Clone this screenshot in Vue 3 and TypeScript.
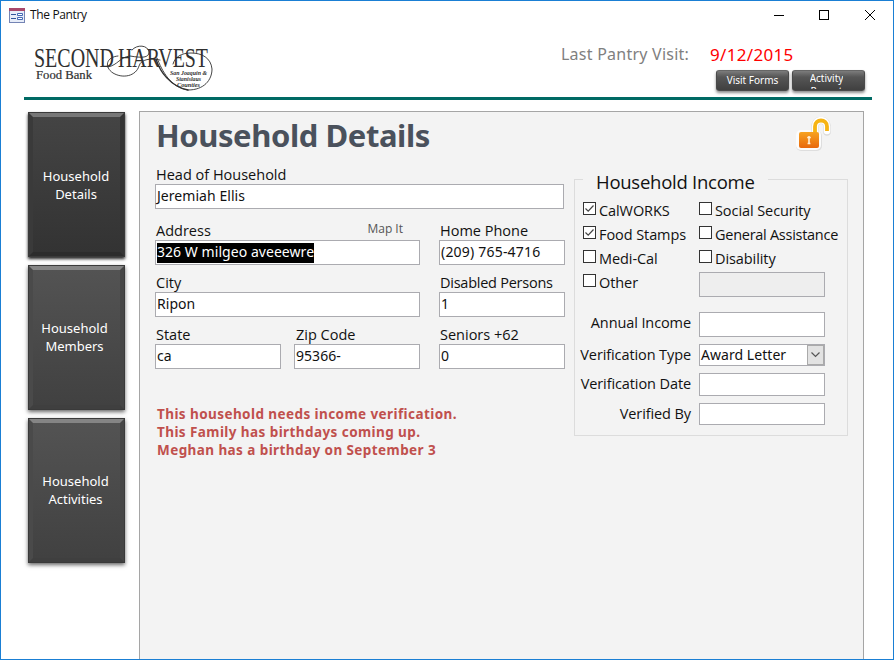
<script setup lang="ts">
import { ref } from 'vue'

interface Field {
  key: string
  label: string
  value: string
  selected?: boolean
}

interface Source {
  name: string
  checked: boolean
}

const nav = ref(['Details', 'Members', 'Activities'])
const active = ref('Details')

const fields = ref<Field[]>([
  { key: 'head', label: 'Head of Household', value: 'Jeremiah Ellis' },
  { key: 'address', label: 'Address', value: '326 W milgeo aveeewre', selected: true },
  { key: 'phone', label: 'Home Phone', value: '(209) 765-4716' },
  { key: 'city', label: 'City', value: 'Ripon' },
  { key: 'disabled', label: 'Disabled Persons', value: '1' },
  { key: 'state', label: 'State', value: 'ca' },
  { key: 'zip', label: 'Zip Code', value: '95366-' },
  { key: 'seniors', label: 'Seniors +62', value: '0' },
])

const sources = ref<Source[]>([
  { name: 'CalWORKS', checked: true },
  { name: 'Social Security', checked: false },
  { name: 'Food Stamps', checked: true },
  { name: 'General Assistance', checked: false },
  { name: 'Medi-Cal', checked: false },
  { name: 'Disability', checked: false },
  { name: 'Other', checked: false },
])

const notices = [
  'This household needs income verification.',
  'This Family has birthdays coming up.',
  'Meghan has a birthday on September 3',
]
</script>

<template>
  <div class="window">
    <header class="titlebar">
      <svg class="app-icon" width="16" height="15" viewBox="0 0 16 15">
        <rect x="0.5" y="0.5" width="15" height="14" fill="#e6ecf8" stroke="#7484b4" />
        <rect x="0" y="0" width="16" height="3" fill="#a8476b" />
        <path d="M2 6.500h5M2 10.500h5" stroke="#31549b" />
        <path d="M8.500 5.500h5v2h-5zM8.500 9.500h5v2h-5z" fill="#fff" stroke="#4469b4" />
      </svg>
      <span class="caption">The Pantry</span>
      <svg class="controls" width="104" height="12" viewBox="0 0 104 12" fill="none" stroke="#000">
        <path d="M1 6.500h10" />
        <rect x="46.500" y="1.500" width="9" height="9" />
        <path d="M92 1l10 10M102 1L92 11" />
      </svg>
    </header>

    <section class="banner">
      <svg class="logo" width="186" height="54" viewBox="0 0 186 54">
        <g fill="#303030" font-family="'Liberation Serif', serif">
          <text x="4" y="26" font-size="28" textLength="80" lengthAdjust="spacingAndGlyphs">SECOND</text>
          <text x="88" y="26" font-size="28" textLength="90" lengthAdjust="spacingAndGlyphs">HARVEST</text>
          <text x="6" y="38" font-size="12.500" stroke="#303030" stroke-width=".2" textLength="56" lengthAdjust="spacingAndGlyphs">Food Bank</text>
          <g font-size="6.500" font-weight="bold" font-style="italic">
            <text x="140" y="33.500" textLength="37" lengthAdjust="spacingAndGlyphs">San Joaquin &amp;</text>
            <text x="146" y="39.500" textLength="25" lengthAdjust="spacingAndGlyphs">Stanislaus</text>
            <text x="147" y="45.500" textLength="23" lengthAdjust="spacingAndGlyphs">Counties</text>
          </g>
        </g>
        <g fill="none" stroke="#303030" stroke-width=".9" stroke-linecap="round">
          <path d="M88 15C76 16 74 26 83 32C93 38 106 35 109 25C111 18 121 17 130 19" />
          <path d="M78 26C88 24 90 16 100 15C112 17 119 17 119 11C118 4 107 3 102 9" />
          <path d="M127 17C132 30 141 47 158 49C174 49 182 39 182 28C181 17 172 12 161 12C151 12 145 16 143 23" />
          <path d="M126 18C130 31 140 45 158 49" stroke-width="1.300" />
        </g>
      </svg>
      <div class="visit">
        <div class="visit-line">
          <span class="visit-label">Last Pantry Visit:</span>
          <span class="visit-date">9/12/2015</span>
        </div>
        <div class="actions">
          <button class="bevel small" type="button"><span class="forms">Visit Forms</span></button>
          <button class="bevel small report" type="button"><span>Activity<br />Report</span></button>
        </div>
      </div>
    </section>

    <main class="body">
      <nav class="sidebar">
        <button
          v-for="item in nav"
          :key="item"
          type="button"
          class="bevel tile"
          :class="[item.toLowerCase(), { active: item === active }]"
          @click="active = item"
        >
          <span>Household<br />{{ item }}</span>
        </button>
      </nav>

      <section class="panel">
        <div class="left">
          <h1><span>Household Details</span></h1>
          <div class="fields">
            <div v-for="f in fields" :key="f.key" class="field" :class="f.key">
              <div class="label-row">
                <label>{{ f.label }}</label>
                <a v-if="f.key === 'address'" class="map">Map It</a>
              </div>
              <div class="box">
                <span class="value" :class="{ selected: f.selected }">{{ f.value }}</span>
              </div>
            </div>
          </div>
          <div class="notices">
            <p v-for="n in notices" :key="n"><span>{{ n }}</span></p>
          </div>
        </div>

        <div class="right">
          <svg class="lock" width="36" height="36" viewBox="0 0 36 36">
            <defs>
              <linearGradient id="lockFill" x1="0" y1="0" x2="0" y2="1">
                <stop offset="0" stop-color="#f7a321" />
                <stop offset="1" stop-color="#e8680d" />
              </linearGradient>
            </defs>
            <rect x="1" y="14" width="26" height="20" rx="5" fill="#dedede" />
            <rect x="1" y="13" width="25" height="20" rx="5" fill="#fcfcfc" />
            <path d="M20 18V10C20 1 32 1 32 10V15" fill="none" stroke="#dcdcdc" stroke-width="7.500" stroke-linecap="round" />
            <path d="M20 18V9.500C20 1 32 1 32 9.500V14" fill="none" stroke="#fff" stroke-width="6.500" stroke-linecap="round" />
            <path d="M20 17V9.500C20 1.500 32 1.500 32 9.500V14" fill="none" stroke="#f6b414" stroke-width="3.800" />
            <rect x="4" y="15" width="20" height="16" rx="2" fill="url(#lockFill)" />
            <path d="M14 19v7.500M12.200 20.500h3.600M12.600 26.500h2.800" fill="none" stroke="#fff1da" stroke-width="1.600" />
          </svg>

          <div class="income">
            <h2><span>Household Income</span></h2>
            <div class="sources">
              <div v-for="s in sources" :key="s.name" class="source">
                <svg class="check" width="13" height="13" viewBox="0 0 13 13">
                  <rect x=".5" y=".5" width="12" height="12" fill="#fff" stroke="#333" />
                  <path v-if="s.checked" d="M2.500 6.500l2.700 2.700L10.500 3.500" fill="none" stroke="#444" stroke-width="1.200" />
                </svg>
                <label>{{ s.name }}</label>
              </div>
              <div class="box other"></div>
            </div>
            <div class="verify">
              <label>Annual Income</label>
              <div class="box annual"></div>
              <label>Verification Type</label>
              <div class="box combo">
                <span class="value">Award Letter</span>
                <span class="arrow">
                  <svg width="9" height="6" viewBox="0 0 9 6"><path d="M.5.5l4 4 4-4" fill="none" stroke="#555" stroke-width="1.200" /></svg>
                </span>
              </div>
              <label>Verification Date</label>
              <div class="box date"></div>
              <label>Verified By</label>
              <div class="box by"></div>
            </div>
          </div>
        </div>
      </section>
    </main>
  </div>
</template>

<style>
html,
body {
  margin: 0;
  overflow: hidden;
}
</style>

<style scoped>
* {
  box-sizing: border-box;
}
.window {
  width: 894px;
  height: 660px;
  border: 1px solid #1a7fd4;
  background: #fff;
  color: #111;
  font-family: 'Open Sans', 'Noto Sans', sans-serif;
  display: flex;
  flex-direction: column;
  overflow: hidden;
  white-space: nowrap;
}
.titlebar {
  height: 30px;
  flex: none;
  display: flex;
  align-items: center;
  padding: 0 16px 2px 8px;
}
.caption {
  margin-left: 5px;
  font-size: 12px;
  letter-spacing: -0.35px;
  line-height: 18px;
}
.controls {
  margin-left: auto;
}
.banner {
  height: 69px;
  flex: none;
  margin: 0 21px 0 23px;
  border-bottom: 3px solid #006a64;
  display: flex;
  justify-content: space-between;
}
.logo {
  margin: 10px 0 0 6px;
}
.visit {
  display: flex;
  flex-direction: column;
  align-items: flex-end;
  padding: 11px 7px 0 0;
}
.visit-line {
  display: flex;
  height: 28px;
  line-height: 25px;
  width: 304px;
}
.visit-label {
  width: 149px;
  font-family: 'Noto Sans', sans-serif;
  font-size: 16px;
  letter-spacing: 0.24px;
  color: #808080;
}
.visit-date {
  color: #f00;
  font-family: 'Noto Sans', sans-serif;
  font-size: 17px;
  letter-spacing: 0.32px;
}
.actions {
  display: flex;
  gap: 3px;
}
.bevel {
  border: 0;
  padding: 0;
  color: #fff;
  font-family: 'Noto Sans', sans-serif;
  overflow: hidden;
}
.small {
  width: 73px;
  height: 21px;
  border-radius: 3px;
  background: linear-gradient(#7c7c7c 0, #565656 6px, #404040);
  border: 1px solid #4a4a4a;
  border-top-color: #666;
  box-shadow: 0 2px 3px rgba(0, 0, 0, 0.45);
  font-size: 10px;
  line-height: 13px;
  display: flex;
  justify-content: center;
  align-items: flex-start;
  padding-top: 3px;
  text-align: center;
}
.report {
  padding: 1px 4px 0 0;
  line-height: 13px;
}
.report span {
  height: 17px;
  overflow: hidden;
}
.body {
  flex: 1;
  display: flex;
  min-height: 0;
  padding: 11px 0 0 27px;
}
.sidebar {
  width: 97px;
  margin: 1px 14px 0 0;
  display: flex;
  flex-direction: column;
  gap: 8px;
}
.tile {
  height: 145px;
  flex: none;
  border: 5px solid;
  border-color: #858585 #464646 #3f3f3f #4a4a4a;
  outline: 1px solid #3a3a3a;
  outline-offset: -1px;
  background: linear-gradient(#535353, #414141);
  box-shadow: 0 2px 4px rgba(0, 0, 0, 0.6);
  font-size: 13px;
  line-height: 18px;
}
.tile.active {
  background: linear-gradient(#444, #333);
  border-color: #777 #353535 #2c2c2c #3a3a3a;
  box-shadow: 0 2px 3px #222;
  padding-right: 1px;
}
.tile.members {
  padding: 0 4px 2px 0;
}
.tile.activities {
  padding: 0 2px 2px 0;
}
.panel {
  width: 725px;
  background: #f3f3f3;
  border: 1px solid #a5a5a5;
  border-bottom: 0;
  display: flex;
  padding-left: 15px;
}
.left {
  width: 419px;
  flex: none;
}
h1 {
  height: 52px;
  margin: 0;
  padding-left: 1px;
  font-family: 'Noto Sans', sans-serif;
  font-size: 31px;
  line-height: 47px;
  letter-spacing: -0.42px;
  color: #4a515c;
  font-weight: 700;
}
.fields {
  display: grid;
  grid-template-columns: 126px 13px 126px 19px 126px;
  row-gap: 7px;
}
.field {
  display: flex;
  flex-direction: column;
}
.head {
  grid-column: 1 / -1;
  margin: 0 1px 4px 0;
}
.address,
.city {
  grid-column: 1 / 4;
}
.phone,
.disabled,
.seniors {
  grid-column: 5;
}
.phone .value {
  letter-spacing: 0.2px;
}
.disabled label {
  letter-spacing: -0.25px;
}
.state {
  grid-column: 1;
}
.zip {
  grid-column: 3;
}
.zip .label-row {
  padding-left: 2px;
}
.label-row {
  display: flex;
  justify-content: space-between;
  height: 20px;
  line-height: 21px;
  padding-left: 1px;
}
label {
  font-size: 14.5px;
}
.map {
  margin-right: 17px;
  font-size: 12px;
  line-height: 17px;
  color: #555;
}
.box {
  height: 25px;
  border: 1px solid #ababb0;
  background: #fff;
  padding: 1px 0 0 1px;
  line-height: 19px;
}
.value {
  display: inline-block;
  height: 20px;
  font-family: 'Noto Sans', sans-serif;
  font-size: 14px;
  letter-spacing: 0.05px;
}
.field .value {
  line-height: 18px;
}
.selected {
  background: #000;
  color: #fff;
}
.notices {
  padding: 36px 0 0 2px;
}
.notices p {
  margin: 0;
  font-family: 'Noto Sans', sans-serif;
  font-size: 13.5px;
  letter-spacing: 0.42px;
  line-height: 18px;
  font-weight: 700;
  color: #c0504d;
}
.right {
  width: 274px;
  display: flex;
  flex-direction: column;
}
.lock {
  margin: 5px 0 0 221px;
}
.income {
  margin-top: 26px;
  height: 257px;
  border: 1px solid #dcdcdc;
}
h2 {
  width: 185px;
  height: 22px;
  margin: -8px 0 0 8px;
  padding-left: 13px;
  background: #f3f3f3;
  font-size: 18.5px;
  letter-spacing: -0.25px;
  line-height: 20px;
  font-weight: 400;
}
.sources {
  display: grid;
  grid-template-columns: 116px 1fr;
  grid-auto-rows: 24px;
  margin: 6px 0 0 8px;
}
.source {
  display: flex;
  gap: 3px;
  padding-top: 2px;
}
.source label {
  line-height: 18px;
  letter-spacing: -0.08px;
}
.source:nth-child(4) label {
  letter-spacing: -0.27px;
}
.other {
  width: 126px;
  background: #eee;
}
.verify {
  display: grid;
  grid-template-columns: 116px 126px;
  column-gap: 8px;
  grid-template-rows: 32px 29px 30px 25px;
  margin-top: 16px;
}
.verify label {
  text-align: right;
  line-height: 22px;
  letter-spacing: -0.1px;
}
.combo {
  height: 22px;
  display: flex;
  padding: 0 0 0 1px;
}
.arrow {
  margin-left: auto;
  width: 17px;
  border: 1px solid #aaa;
  background: #e2e2e2;
  display: flex;
  align-items: center;
  justify-content: center;
}
.date {
  height: 23px;
}
.by {
  height: 22px;
}
</style>
